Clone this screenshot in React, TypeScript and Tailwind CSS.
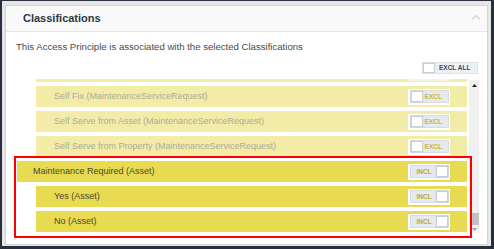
import React from 'react';

interface Item {
    label: string;
    included: boolean;
    child: boolean;
}

const items: Item[] = [
    { label: 'Self Fix (MaintenanceServiceRequest)', included: false, child: true },
    { label: 'Self Serve from Asset (MaintenanceServiceRequest)', included: false, child: true },
    { label: 'Self Serve from Property (MaintenanceServiceRequest)', included: false, child: true },
    { label: 'Maintenance Required (Asset)', included: true, child: false },
    { label: 'Yes (Asset)', included: true, child: true },
    { label: 'No (Asset)', included: true, child: true },
];

function Knob() {
    return (
        <span className="h-full w-[12px] shrink-0 border border-[#c9ced8] bg-white shadow-[0_0_1px_rgba(0,0,0,0.15)]" />
    );
}

function Toggle({ included }: { included: boolean }) {
    return (
        <div className="h-[16px] w-[42px] bg-white p-[1.5px]">
            <div className="flex h-full items-center border border-[#d7dbe4] bg-[#e6e9f1]">
                {!included && <Knob />}
                <span
                    className={
                        included
                            ? 'flex-1 pl-[6px] text-[6.6px] font-bold text-[#bcaa35]'
                            : 'flex-1 pl-[2px] text-[6.6px] font-bold text-[#c9b935]'
                    }
                >
                    {included ? 'INCL' : 'EXCL'}
                </span>
                {included && <Knob />}
            </div>
        </div>
    );
}

export default function App() {
    return (
        <div
            className="h-[249px] w-[494px] bg-[#29303d] pb-[3px] pl-[2px] pr-[3px] pt-[1px]"
            style={{ fontFamily: '"Liberation Sans", Arial, sans-serif' }}
        >
            <div className="h-full bg-[#e6e6e6] px-[3px] pb-[1px] pt-[4px]">
                <div className="relative flex h-full flex-col border border-[#d4d4d4] bg-white">
                    <div className="flex h-[26px] shrink-0 items-center justify-between border-b border-[#e6e6e6] bg-[#f9f9f9] pl-[17px] pr-[6px]">
                        <span className="text-[11px] font-bold text-[#2b384a]">
                            Classifications
                        </span>
                        <svg width="10" height="6" viewBox="0 0 10 6" className="mb-[4px]">
                            <polyline
                                points="1,5.5 5,1.5 9,5.5"
                                fill="none"
                                stroke="#cfd6df"
                                strokeWidth="1.2"
                            />
                        </svg>
                    </div>

                    <div className="flex flex-1 flex-col pl-[10px] pr-[8px]">
                        <p className="mt-[9px] text-[9.6px] leading-[12px] text-[#4a4a4a]">
                            This Access Principle is associated with the selected Classifications
                        </p>

                        <div className="mt-[8px] flex justify-end">
                            <div className="h-[14px] w-[58px] bg-white p-[1px]">
                                <div className="flex h-full items-center border border-[#dde1e8] bg-[#eef0f5]">
                                    <Knob />
                                    <span className="pl-[4px] text-[6.5px] font-bold text-[#3f4959]">
                                        EXCL ALL
                                    </span>
                                </div>
                            </div>
                        </div>

                        <div className="ml-[1px] mt-[4px] flex h-[154px]">
                            <div className="flex flex-1 flex-col gap-[4px] overflow-hidden">
                                <div className="ml-[19px] flex h-[3px] shrink-0 justify-end bg-[#f2eca4] pr-[17px]">
                                    <span className="h-[2px] w-[42px] bg-[#f7f4d8]" />
                                </div>
                                {items.map((item) => (
                                    <div
                                        key={item.label}
                                        className={
                                            (item.child ? 'ml-[19px] pl-[18px] ' : 'pl-[16px] ') +
                                            (item.included
                                                ? 'bg-[#e8db52] text-[#4b472f] '
                                                : 'bg-[#f2eca6] text-[#adab9c] ') +
                                            'flex h-[21px] shrink-0 items-center justify-between pr-[17px] text-[9px]'
                                        }
                                    >
                                        <span>{item.label}</span>
                                        <Toggle included={item.included} />
                                    </div>
                                ))}
                            </div>

                            <div className="ml-[2px] mt-[1px] flex w-[10px] flex-col items-center bg-[#f0f0f0] pb-[2px] pt-[4px]">
                                <svg width="5" height="3" viewBox="0 0 5 3">
                                    <polygon points="0,3 2.5,0 5,3" fill="#222" />
                                </svg>
                                <div className="flex-1" />
                                <div className="h-[12px] w-[9px] bg-[#c1c1c1]" />
                                <svg width="5" height="3" viewBox="0 0 5 3" className="mt-[3px]">
                                    <polygon points="0,0 5,0 2.5,3" fill="#a3a3a3" />
                                </svg>
                            </div>
                        </div>
                    </div>

                    <div className="pointer-events-none absolute left-[8px] top-[150px] h-[82px] w-[458px] border-2 border-[#ff0000]" />
                </div>
            </div>
        </div>
    );
}
